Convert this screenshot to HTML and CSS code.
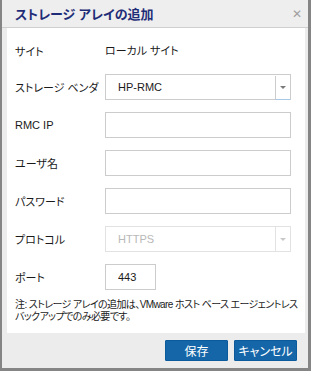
FILE: index.html
```html
<!DOCTYPE html>
<html lang="ja">
<head>
    <meta charset="UTF-8">
    <title>ストレージ アレイの追加</title>
    <link rel="stylesheet" href="styles.css">
</head>
<body>
    <div class="dialog">
        <header class="dialog-header">
            <h1>ストレージ アレイの追加</h1>
            <span class="close">&#x2715;</span>
        </header>

        <div class="dialog-body">
            <div class="row row-text">
                <label>サイト</label>
                <span class="value">ローカル サイト</span>
            </div>
            <div class="row">
                <label>ストレージ ベンダ</label>
                <div class="select">
                    <span class="select-text">HP-RMC</span>
                    <span class="select-arrow"></span>
                </div>
            </div>
            <div class="row">
                <label>RMC IP</label>
                <input type="text" class="field">
            </div>
            <div class="row">
                <label>ユーザ名</label>
                <input type="text" class="field">
            </div>
            <div class="row">
                <label>パスワード</label>
                <input type="password" class="field">
            </div>
            <div class="row">
                <label>プロトコル</label>
                <div class="select disabled">
                    <span class="select-text">HTTPS</span>
                    <span class="select-arrow"></span>
                </div>
            </div>
            <div class="row">
                <label>ポート</label>
                <input type="text" class="field port" value="443">
            </div>
            <p class="note">注: ストレージ アレイの追加は、VMware ホスト ベース エージェントレス<br>バックアップでのみ必要です。</p>
        </div>

        <footer class="dialog-footer">
            <button class="btn">保存</button>
            <button class="btn">キャンセル</button>
        </footer>
    </div>
</body>
</html>
```

FILE: styles.css
```css
* {
    margin: 0;
    padding: 0;
    box-sizing: border-box;
}

body {
    font-family: 'Liberation Sans', 'Noto Sans CJK JP', sans-serif;
    font-feature-settings: "palt";
    font-size: 11px;
    color: #1a1a1a;
    background: #fff;
}

.dialog {
    width: 311px;
    height: 371px;
    background: #ececec;
    border-left: 2px solid #858585;
    border-right: 3px solid #858585;
    border-bottom: 3px solid #858585;
    display: flex;
    flex-direction: column;
}

.dialog-header {
    height: 28px;
    display: flex;
    align-items: center;
    justify-content: space-between;
    padding: 0 6px 0 13px;
    border-bottom: 1px solid #cfcfcf;
    background: #eeeeee;
}

.dialog-header h1 {
    font-size: 13px;
    font-weight: bold;
    color: #1f2d78;
}

.close {
    font-size: 12px;
    color: #a0a0a0;
    font-family: 'DejaVu Sans', sans-serif;
}

.dialog-body {
    background: #fff;
    margin: 0 0 0 5px;
    width: 298px;
    height: 305px;
    padding: 10px 14px 0 8px;
}

.row {
    display: flex;
    align-items: center;
    height: 26px;
    margin-bottom: 12px;
}

.row-text {
    margin-bottom: 10px;
}

.row label {
    width: 90px;
    flex-shrink: 0;
}

.row-text .value {
    margin-top: -3px;
}

.field {
    width: 186px;
    height: 26px;
    border: 1px solid #cccccc;
    background: #fff;
    font: inherit;
    padding: 0 12px;
    outline: none;
    color: #1a1a1a;
}

.field.port {
    width: 51px;
}

.select {
    width: 186px;
    height: 26px;
    border: 1px solid #cccccc;
    display: flex;
    align-items: center;
    background: #fff;
}

.select-text {
    flex: 1;
    padding-left: 12px;
}

.select-arrow {
    width: 15px;
    height: 100%;
    border-left: 1px solid #cccccc;
    border-bottom: 1px solid #a8c8e8;
    margin-bottom: -1px;
    display: flex;
    align-items: center;
    justify-content: center;
}

.select-arrow::after {
    content: "";
    border-left: 3px solid transparent;
    border-right: 3px solid transparent;
    border-top: 3px solid #7a7a7a;
}

.select.disabled {
    border-color: #e2e2e2;
    color: #b8b8b8;
}

.select.disabled .select-arrow {
    border-left-color: #e2e2e2;
    border-bottom: none;
    margin-bottom: 0;
}

.select.disabled .select-arrow::after {
    border-top-color: #c8c8c8;
}

.note {
    font-size: 10px;
    line-height: 12px;
    margin-top: -3px;
    white-space: nowrap;
    letter-spacing: -0.6px;
}

.dialog-footer {
    flex: 1;
    display: flex;
    justify-content: flex-end;
    gap: 6px;
    padding: 7px 11px 0 0;
}

.btn {
    flex-shrink: 0;
    width: 63px;
    height: 21px;
    border: 1px solid #0a5a9c;
    border-radius: 1px;
    background: #1466a8;
    color: #fff;
    font: inherit;
    font-size: 12px;
}
```
